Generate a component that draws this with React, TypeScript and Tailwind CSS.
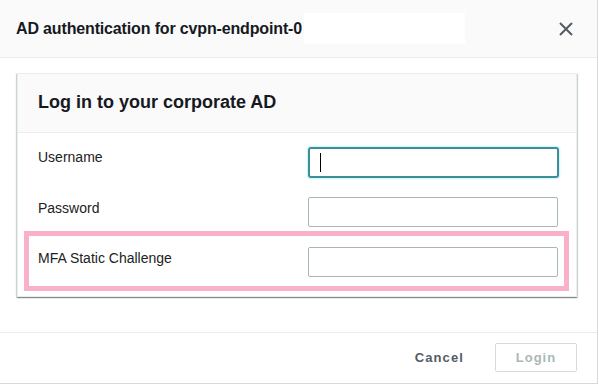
export default function App() {
  return (
    <div className="w-[599px] h-[385px] bg-white font-['Liberation_Sans',Arial,sans-serif]">
      <div className="w-[598px] h-[384px] flex flex-col border-r border-b border-[#d5dbdb] bg-white">
        {/* header */}
        <div className="h-[58px] shrink-0 flex items-center justify-between pl-[16px] pr-[24px] bg-[#fafafa] border-b border-[#eaeded]">
          <div className="flex items-center">
            <h1 className="text-[16px] font-bold text-[#16191f] tracking-[-0.15px]">AD authentication for cvpn-endpoint-0</h1>
            <span className="block w-[161px] h-[31px] bg-white ml-[2px]" />
          </div>
          <button className="text-[#545b64]">
            <svg width="14" height="14" viewBox="0 0 14 14" fill="none" stroke="currentColor" strokeWidth="2">
              <path d="M1 1l12 12M13 1L1 13" />
            </svg>
          </button>
        </div>

        {/* body */}
        <div className="flex-1 pt-[15px] pl-[17px] pr-[20px]">
          <div className="border border-[#eaeded] shadow-[0_1px_1px_0_rgba(0,28,36,0.3),1px_1px_1px_0_rgba(0,28,36,0.15),-1px_1px_1px_0_rgba(0,28,36,0.15)]">
            <div className="h-[59px] flex items-center pl-[20px] pb-[2px] bg-[#fafafa] border-b border-[#eaeded]">
              <h2 className="text-[18px] font-bold text-[#16191f]">Log in to your corporate AD</h2>
            </div>
            <div className="pt-[14px] pb-[5px] flex flex-col">
              <div className="flex items-start pl-[20px] h-[31px]">
                <label className="w-[270px] text-[14px] leading-[16px] mt-[2px] text-[#222]">Username</label>
                <div className="w-[251px] h-[31px] border-2 border-[#3d8f97] rounded-[3px] shadow-[0_0_2px_1px_#c9f1f7] flex items-center pl-[10px]">
                  <span className="block w-px h-[19px] bg-black" />
                </div>
              </div>
              <div className="flex items-start pl-[20px] h-[30px] mt-[19px]">
                <label className="w-[270px] text-[14px] leading-[16px] mt-[3px] text-[#222]">Password</label>
                <input className="w-[250px] h-[30px] border border-[#aab7b8] rounded-[2px] outline-none" />
              </div>
              <div className="mt-[4px] ml-[6px] mr-[7px] border-[5px] border-[#f9b1ca] pt-[11px] pb-[9px] pl-[9px] flex items-start">
                <label className="w-[270px] text-[14px] leading-[16px] mt-[3px] text-[#222]">MFA Static Challenge</label>
                <input className="w-[250px] h-[30px] border border-[#aab7b8] rounded-[2px] outline-none" />
              </div>
            </div>
          </div>
        </div>

        {/* footer */}
        <div className="h-[51px] shrink-0 flex items-start justify-end pr-[20px] pt-[10px] border-t border-[#eaeded]">
          <button className="h-[29px] px-[4px] mr-[27px] text-[13px] font-bold tracking-[1.1px] text-[#545b64]">Cancel</button>
          <button className="w-[82px] h-[29px] border border-[#d5dbdb] rounded-[2px] text-[13px] font-bold tracking-[1px] text-[#aab7b8]">Login</button>
        </div>
      </div>
    </div>
  );
}
